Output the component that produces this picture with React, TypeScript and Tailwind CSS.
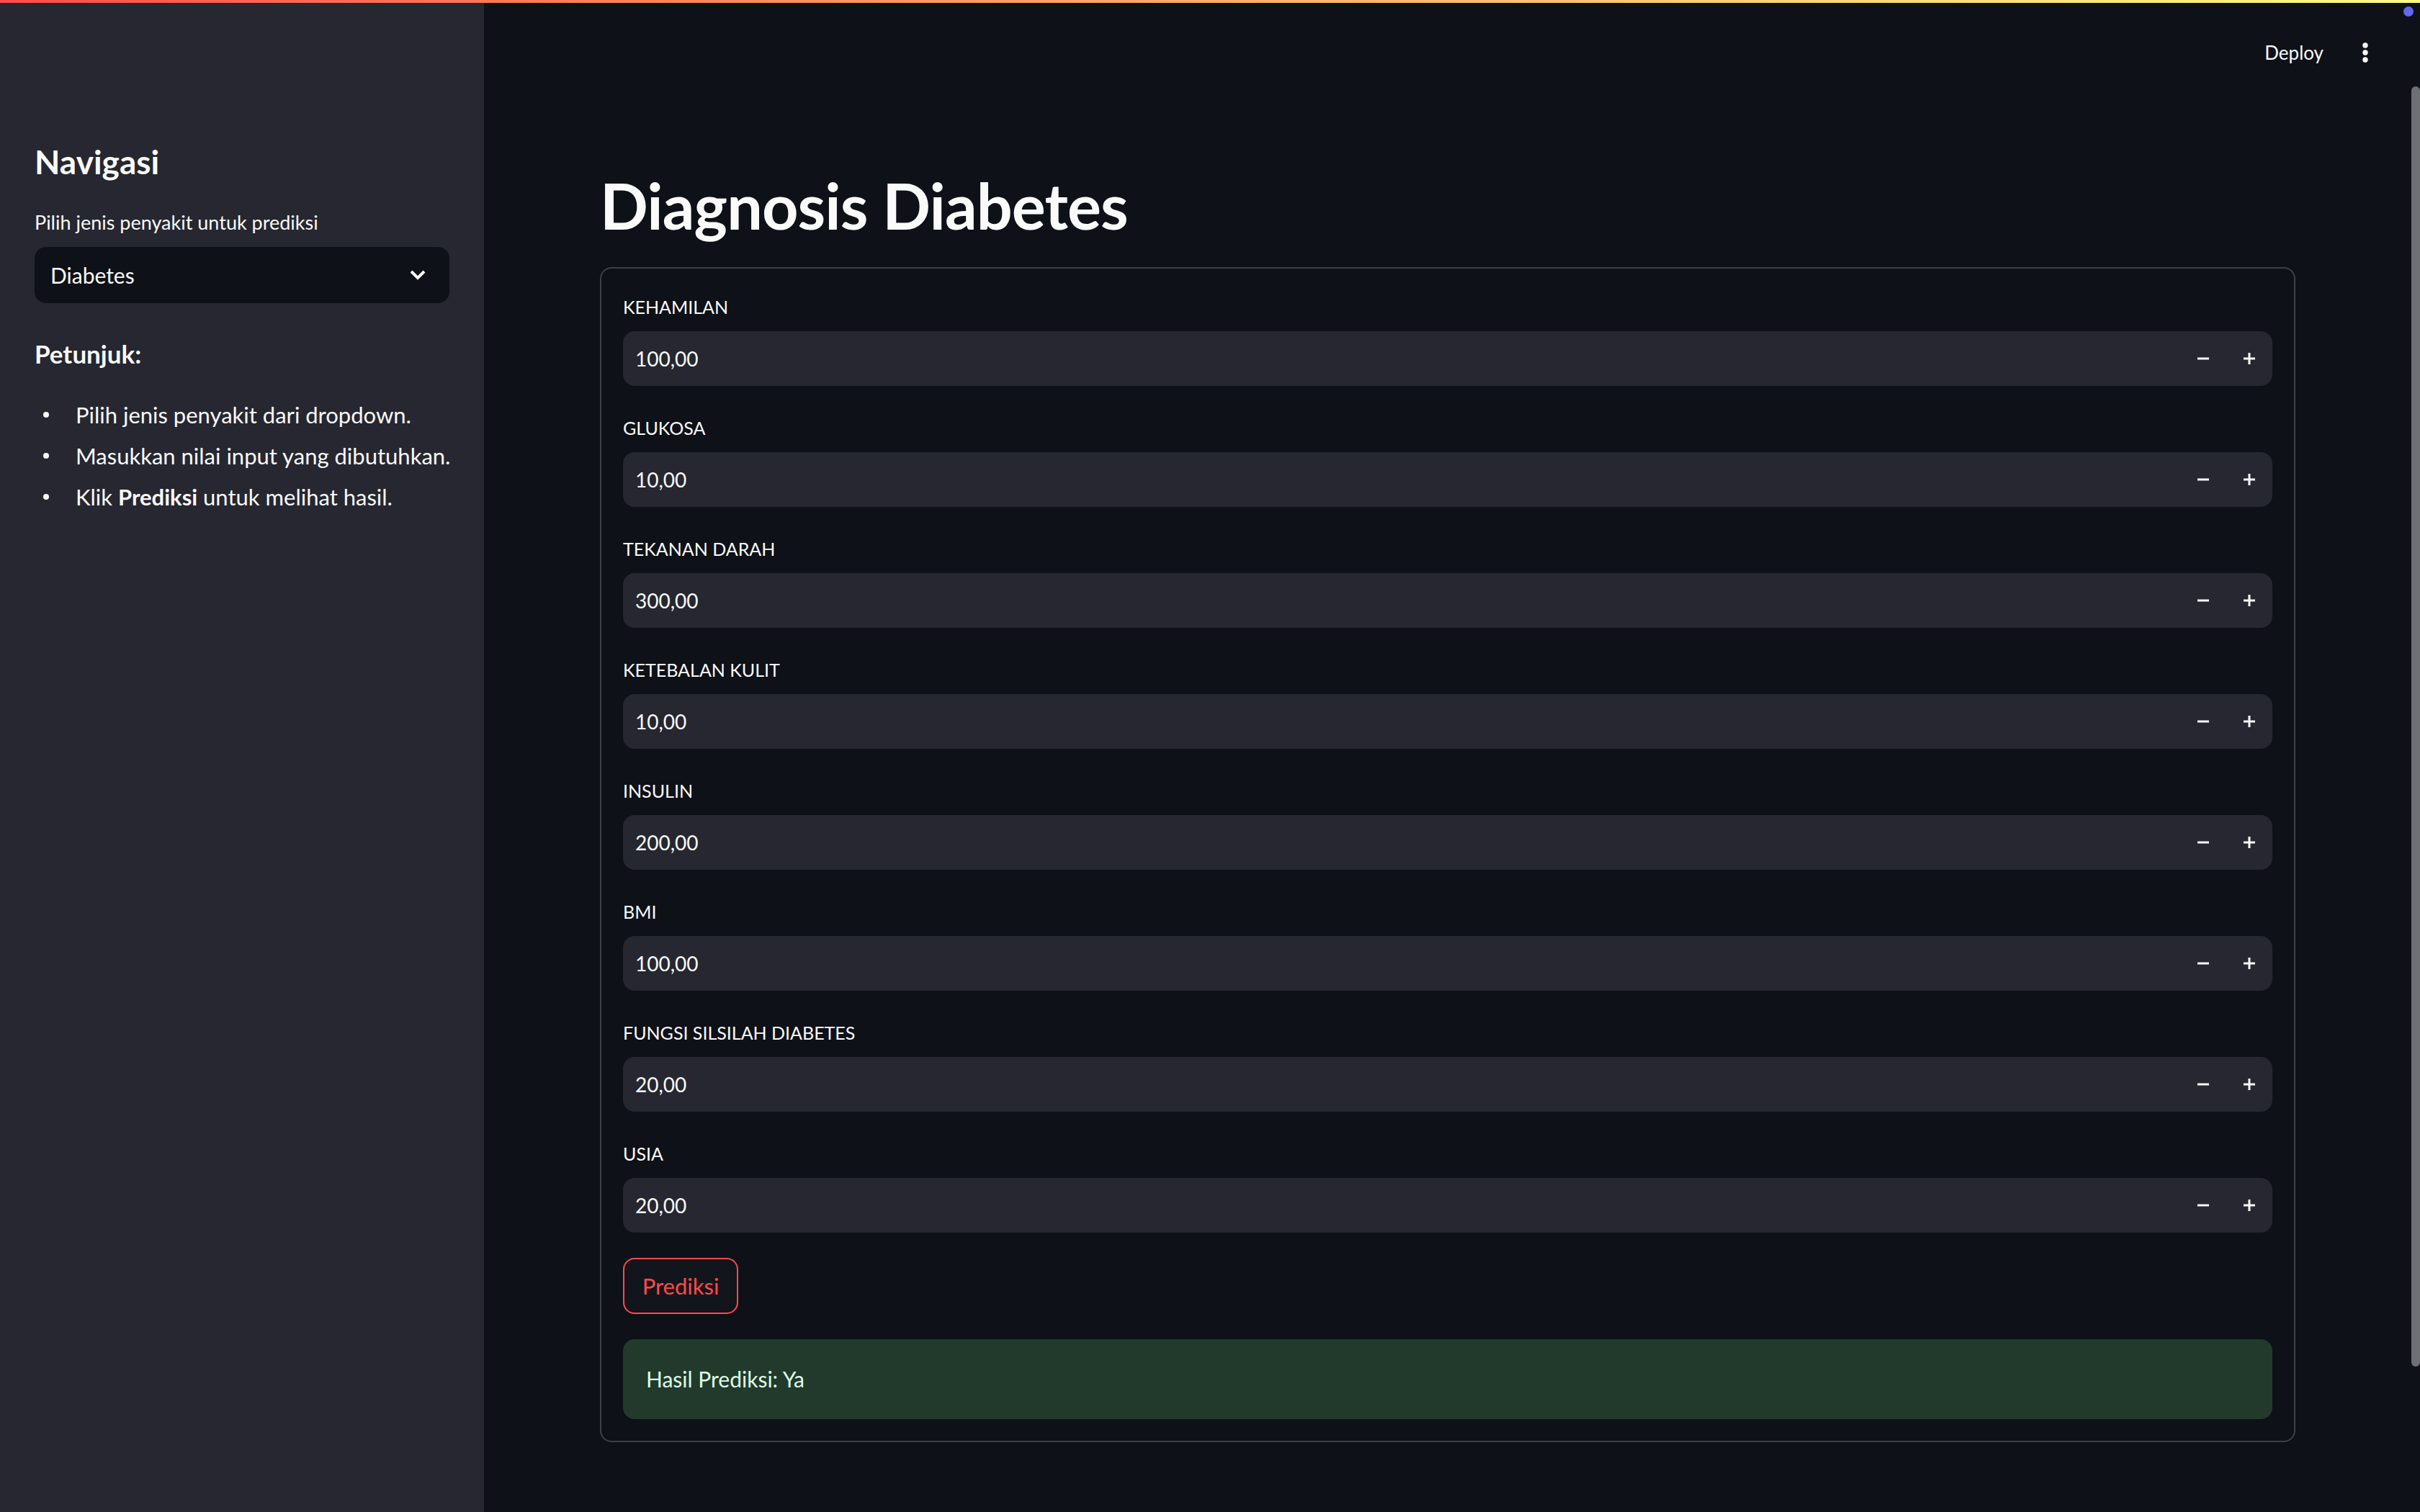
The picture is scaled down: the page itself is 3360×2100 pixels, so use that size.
import React from "react";

const FIELDS: [string, string][] = [
  ["KEHAMILAN", "100,00"],
  ["GLUKOSA", "10,00"],
  ["TEKANAN DARAH", "300,00"],
  ["KETEBALAN KULIT", "10,00"],
  ["INSULIN", "200,00"],
  ["BMI", "100,00"],
  ["FUNGSI SILSILAH DIABETES", "20,00"],
  ["USIA", "20,00"],
];

const TIPS = [
  <>Pilih jenis penyakit dari dropdown.</>,
  <>Masukkan nilai input yang dibutuhkan.</>,
  <>
    Klik <strong className="font-bold">Prediksi</strong> untuk melihat hasil.
  </>,
];

function Minus() {
  return (
    <svg width="18" height="18" viewBox="0 0 18 18">
      <rect x="1" y="7.5" width="16" height="3" fill="#fafafa" />
    </svg>
  );
}

function Plus() {
  return (
    <svg width="18" height="18" viewBox="0 0 18 18">
      <rect x="1" y="7.5" width="16" height="3" fill="#fafafa" />
      <rect x="7.5" y="1" width="3" height="16" fill="#fafafa" />
    </svg>
  );
}

function NumberInput({ label, value }: { label: string; value: string }) {
  return (
    <div className="flex flex-col">
      <div className="h-[47px] mb-[10px] flex items-center text-[25px] leading-none">{label}</div>
      <div className="h-[76px] rounded-2xl bg-[#262730] flex items-center">
        <span className="flex-1 pl-[17px] text-[28px]">{value}</span>
        <button className="w-[64px] h-full flex items-center justify-center">
          <Minus />
        </button>
        <button className="w-[64px] h-full flex items-center justify-center">
          <Plus />
        </button>
      </div>
    </div>
  );
}

export default function App() {
  return (
    <div
      className="relative flex h-screen w-full overflow-hidden bg-[#0e1117] text-[#fafafa]"
      style={{ fontFamily: "Lato, 'Noto Sans', sans-serif" }}
    >
      {/* top decoration */}
      <div className="absolute inset-x-0 top-0 h-[4px] bg-gradient-to-r from-[#ff4b4b] to-[#fffd80] z-10" />
      <div className="absolute top-[9px] right-[9px] w-[14px] h-[14px] rounded-full bg-[#6366f1] z-10" />

      {/* Sidebar */}
      <aside className="w-[672px] shrink-0 bg-[#262730] px-12 pt-[195px]">
        <h2 className="text-[46px] font-bold leading-[60px]">Navigasi</h2>
        <div className="mt-[34px] text-[27px] leading-[40px]">Pilih jenis penyakit untuk prediksi</div>
        <div className="mt-[14px] h-[78px] rounded-2xl bg-[#0e1117] flex items-center justify-between pl-[22px] pr-[32px]">
          <span className="text-[30px]">Diabetes</span>
          <svg width="24" height="16" viewBox="0 0 24 16" fill="none">
            <path d="M3 3l9 9 9-9" stroke="#fafafa" strokeWidth="4" />
          </svg>
        </div>
        <div className="mt-[46px] text-[35px] font-bold leading-[48px]">Petunjuk:</div>
        <ul className="mt-[37px] flex flex-col gap-[9px]">
          {TIPS.map((t, i) => (
            <li key={i} className="flex items-center h-[48px] text-[31px]">
              <span className="ml-[12px] w-[8px] h-[8px] rounded-full bg-[#fafafa] shrink-0" />
              <span className="ml-[37px] whitespace-nowrap">{t}</span>
            </li>
          ))}
        </ul>
      </aside>

      {/* Main */}
      <main className="relative flex-1 flex flex-col">
        <header className="h-[146px] shrink-0 flex items-center justify-end gap-[54px] pr-[72px]">
          <span className="text-[26px]">Deploy</span>
          <svg width="8" height="28" viewBox="0 0 8 28">
            <circle cx="4" cy="4" r="3.7" fill="#fafafa" />
            <circle cx="4" cy="14" r="3.7" fill="#fafafa" />
            <circle cx="4" cy="24" r="3.7" fill="#fafafa" />
          </svg>
        </header>

        <div className="pl-[161px] pr-[173px] pt-[86px]">
          <h1 className="text-[88px] font-bold leading-[106px] tracking-[-0.01em]">Diagnosis Diabetes</h1>

          <div className="mt-[33px] border-2 border-[#3d4044] rounded-2xl p-[30px] flex flex-col gap-[35px]">
            {FIELDS.map(([label, value]) => (
              <NumberInput key={label} label={label} value={value} />
            ))}
            <div>
              <button className="h-[78px] w-[160px] rounded-2xl border-2 border-[#ff4b4b] bg-[#12151c] text-[#ff4b4b] text-[31px]">
                Prediksi
              </button>
            </div>
            <div className="h-[111px] rounded-2xl bg-[#223a2b] flex items-center px-[32px] text-[30px] text-[#dffde9]">
              Hasil Prediksi: Ya
            </div>
          </div>
        </div>

        {/* scrollbar */}
        <div className="absolute right-0 top-[120px] w-[12px] h-[1778px] rounded-full bg-[#6f7076]" />
      </main>
    </div>
  );
}
